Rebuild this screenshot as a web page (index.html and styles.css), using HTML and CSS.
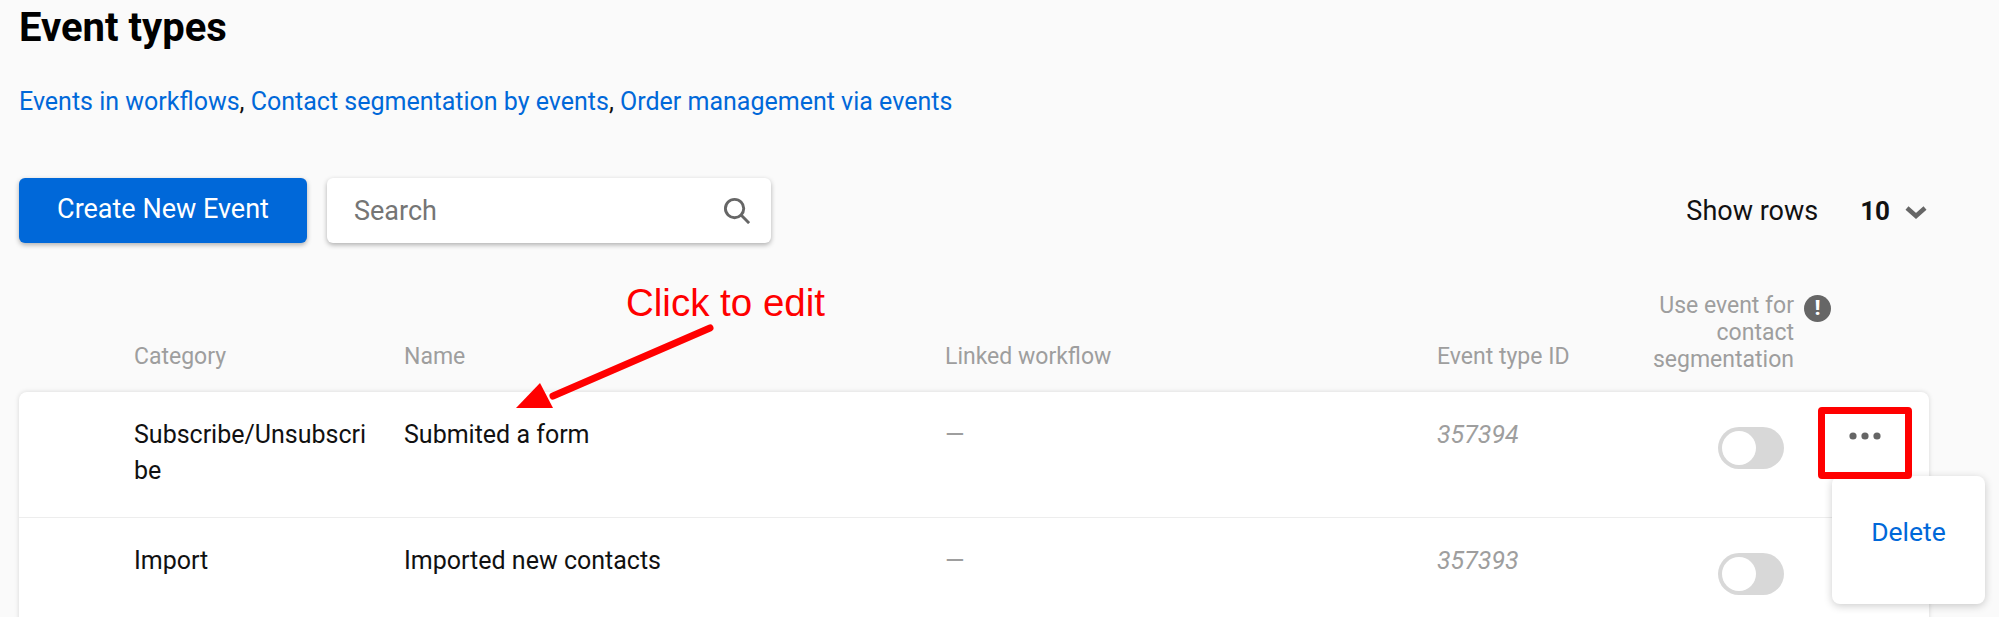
FILE: index.html
```html
<!DOCTYPE html>
<html lang="en">
<head>
<meta charset="utf-8">
<title>Event types</title>
<link rel="stylesheet" href="styles.css">
</head>
<body>
<main class="page">
  <h1 class="title">Event types</h1>
  <p class="links"><a href="#">Events in workflows</a>, <a href="#">Contact segmentation by events</a>, <a href="#">Order management via events</a></p>
  <div class="toolbar">
    <button class="btn-primary">Create New Event</button>
    <div class="search">
      <span class="search-text">Search</span>
      <svg class="search-icon" width="28" height="28" viewBox="0 0 28 28" fill="none" stroke="#666" stroke-width="3"><circle cx="12" cy="12" r="9.5"/><path d="M19 19l7 7" stroke-linecap="square"/></svg>
    </div>
    <div class="rows-picker">
      <span class="rows-label">Show rows</span>
      <b class="rows-value">10</b>
      <svg width="22" height="13" viewBox="0 0 22 13" fill="none" stroke="#666" stroke-width="4.5"><path d="M2 2l9 8 9-8"/></svg>
    </div>
  </div>
  <section class="table">
    <div class="grid head">
      <div>Category</div>
      <div>Name</div>
      <div>Linked workflow</div>
      <div>Event type ID</div>
      <div class="head-seg">
        <span class="head-seg-label">Use event for contact segmentation</span>
        <span class="info">!</span>
      </div>
    </div>
    <div class="card">
      <div class="grid row">
        <div class="cat">Subscribe/Unsubscribe</div>
        <div>Submited a form</div>
        <div class="muted">—</div>
        <div class="id">357394</div>
        <div class="seg"><span class="toggle"></span></div>
        <div class="act">
          <svg class="dots" width="32" height="8" viewBox="0 0 32 8" fill="#666"><circle cx="4" cy="4" r="3.6"/><circle cx="16" cy="4" r="3.6"/><circle cx="28" cy="4" r="3.6"/></svg>
          <div class="menu"><a href="#">Delete</a></div>
          <span class="red-box"></span>
        </div>
      </div>
      <div class="grid row">
        <div class="cat">Import</div>
        <div>Imported new contacts</div>
        <div class="muted">—</div>
        <div class="id">357393</div>
        <div class="seg"><span class="toggle"></span></div>
        <div class="act"></div>
      </div>
    </div>
  </section>
  <div class="callout">Click to edit</div>
  <svg class="callout-arrow" width="210" height="90" viewBox="0 0 210 90"><path d="M197 8L40 76" stroke="#f00" stroke-width="7" stroke-linecap="round" fill="none"/><path d="M3 88L27 63L40 88Z" fill="#f00"/></svg>
</main>
</body>
</html>
```
FILE: styles.css
```css
* { box-sizing: border-box; }
html, body { margin: 0; height: 617px; overflow: hidden; }
body { background: #fafafa; color: #111; font-family: Roboto, "Liberation Sans", sans-serif; font-size: 25px; }
.page { position: relative; height: 617px; padding: 0 70px 0 19px; }
.title { margin: 0; padding-top: 8px; font-size: 40px; line-height: 40px; font-weight: 700; color: #000; }
.links { margin: 0; padding-top: 37px; line-height: 34px; }
.links a { color: #0068d9; text-decoration: none; }
.toolbar { display: flex; align-items: center; margin-top: 59px; height: 65px; }
.btn-primary { width: 288px; height: 65px; border: 0; border-radius: 6px; background: #0068d9; color: #fff; font: 400 27px Roboto, sans-serif; box-shadow: 0 2px 5px rgba(0,0,0,.3); padding: 0 0 3px; }
.search { display: flex; align-items: center; justify-content: space-between; width: 444px; height: 65px; margin-left: 20px; padding: 0 21px 0 27px; background: #fff; border-radius: 6px; box-shadow: 0 2px 5px rgba(0,0,0,.3); font-size: 27px; }
.search-text { color: #757575; }
.search-icon { width: 27px; height: 27px; }
.rows-picker { display: flex; align-items: center; margin-left: auto; padding-right: 2px; font-size: 27px; }
.rows-label { color: #111; }
.rows-value { margin-left: 42px; font-weight: 700; color: #111; font-size: 26px; }
.rows-picker svg { margin-left: 15px; margin-top: 3px; }
.table { margin-top: 47px; }
.grid { display: grid; grid-template-columns: 270px 541px 492px 183px 198px 94px; padding-left: 115px; }
.head { height: 102px; align-items: end; color: #9e9e9e; font-size: 23px; line-height: 27px; padding-bottom: 22px; }
.head-seg { grid-column: span 2; display: flex; justify-content: flex-end; gap: 10px; padding-right: 81px; margin-bottom: -3px; }
.head-seg-label { width: 146px; text-align: right; }
.info { flex: none; width: 27px; height: 27px; margin-top: 3px; border-radius: 50%; background: #666; color: #fff; font-weight: 900; font-size: 20px; line-height: 27px; text-align: center; }
.card { height: 240px; background: #fff; border-radius: 8px 8px 0 0; box-shadow: 0 0 5px rgba(0,0,0,.14); }
.row { height: 126px; padding-top: 25px; line-height: 36px; border-bottom: 1px solid #ededed; color: #111; }
.cat { width: 240px; overflow-wrap: anywhere; }
.muted { color: #9e9e9e; }
.id { color: #9e9e9e; font-style: italic; }
.seg { display: flex; justify-content: flex-end; padding-right: 34px; }
.toggle { position: relative; display: block; width: 66px; height: 42px; margin-top: 10px; border-radius: 21px; background: #d8d8d8; }
.toggle::after { content: ""; position: absolute; left: 4px; top: 4px; width: 34px; height: 34px; border-radius: 50%; background: #fff; }
.act { position: relative; display: flex; justify-content: center; }
.dots { margin-top: 15px; }
.red-box { position: absolute; left: 0; top: -10px; width: 94px; height: 72px; border: 7px solid #f00; border-radius: 4px; }
.menu { position: absolute; left: 14px; top: 59px; display: flex; align-items: center; justify-content: center; width: 153px; height: 128px; padding-bottom: 16px; background: #fff; border-radius: 8px; box-shadow: 0 2px 8px rgba(0,0,0,.2); font-size: 26.5px; }
.menu a { color: #0068d9; text-decoration: none; }
.callout { position: absolute; left: 626px; top: 281px; font-family: "Liberation Sans", Arial, sans-serif; font-size: 38.5px; line-height: 44px; color: #f00; }
.callout-arrow { position: absolute; left: 513px; top: 320px; }
```
